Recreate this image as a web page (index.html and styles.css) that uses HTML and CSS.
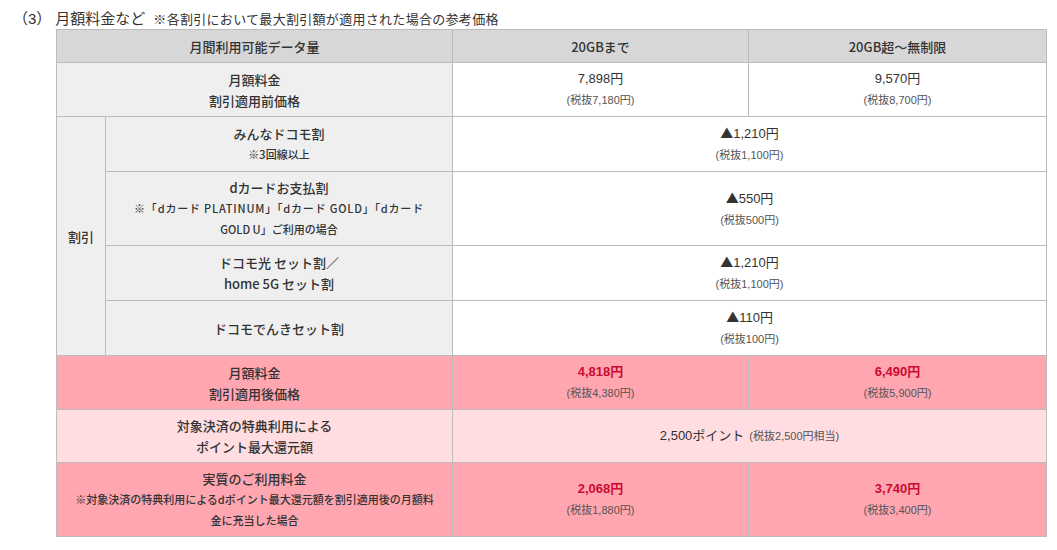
FILE: index.html
```html
<!DOCTYPE html>
<html lang="ja">
<head>
<meta charset="utf-8">
<title>月額料金など</title>
<link rel="stylesheet" href="styles.css">
</head>
<body>
<div class="heading">
  <span class="num">（3）</span><span class="ttl">月額料金など</span><span class="note">※各割引において最大割引額が適用された場合の参考価格</span>
</div>
<table class="price">
  <colgroup>
    <col class="c1"><col class="c2"><col class="c3"><col class="c4">
  </colgroup>
  <tr class="head">
    <th colspan="2"><span class="v">月間利用可能データ量</span></th>
    <th><span class="v">20GBまで</span></th>
    <th><span class="v">20GB超〜無制限</span></th>
  </tr>
  <tr>
    <th class="lbl" colspan="2"><span class="v">月額料金</span><span class="v">割引適用前価格</span></th>
    <td><span class="v">7,898円</span><span class="s">(税抜7,180円)</span></td>
    <td><span class="v">9,570円</span><span class="s">(税抜8,700円)</span></td>
  </tr>
  <tr>
    <th class="lbl side" rowspan="4"><span class="v">割引</span></th>
    <th class="lbl"><span class="v">みんなドコモ割</span><span class="s">※3回線以上</span></th>
    <td colspan="2"><span class="v"><span class="tri">▲</span>1,210円</span><span class="s">(税抜1,100円)</span></td>
  </tr>
  <tr>
    <th class="lbl"><span class="v">dカードお支払割</span><span class="s wide">※「dカード PLATINUM」「dカード GOLD」「dカード</span><span class="s">GOLD U」ご利用の場合</span></th>
    <td colspan="2"><span class="v"><span class="tri">▲</span>550円</span><span class="s">(税抜500円)</span></td>
  </tr>
  <tr>
    <th class="lbl"><span class="v">ドコモ光 セット割／</span><span class="v">home 5G セット割</span></th>
    <td colspan="2"><span class="v"><span class="tri">▲</span>1,210円</span><span class="s">(税抜1,100円)</span></td>
  </tr>
  <tr>
    <th class="lbl"><span class="v">ドコモでんきセット割</span></th>
    <td colspan="2"><span class="v"><span class="tri">▲</span>110円</span><span class="s">(税抜100円)</span></td>
  </tr>
  <tr class="pink">
    <th colspan="2"><span class="v">月額料金</span><span class="v">割引適用後価格</span></th>
    <td><span class="v red">4,818円</span><span class="s">(税抜4,380円)</span></td>
    <td><span class="v red">6,490円</span><span class="s">(税抜5,900円)</span></td>
  </tr>
  <tr class="light">
    <th colspan="2"><span class="v">対象決済の特典利用による</span><span class="v">ポイント最大還元額</span></th>
    <td colspan="2"><span class="v">2,500ポイント<span class="si">(税抜2,500円相当)</span></span></td>
  </tr>
  <tr class="pink">
    <th colspan="2"><span class="v">実質のご利用料金</span><span class="s">※対象決済の特典利用によるdポイント最大還元額を割引適用後の月額料</span><span class="s">金に充当した場合</span></th>
    <td><span class="v red">2,068円</span><span class="s">(税抜1,880円)</span></td>
    <td><span class="v red">3,740円</span><span class="s">(税抜3,400円)</span></td>
  </tr>
</table>
</body>
</html>
```

FILE: styles.css
```css
body {
  margin: 8px;
  font-family: "Liberation Sans", "Noto Sans CJK JP", sans-serif;
  color: #333;
  background: #fff;
}

.heading {
  height: 21px;
  line-height: 21px;
  padding-left: 5px;
  white-space: nowrap;
  overflow: visible;
}

.heading .num {
  font-size: 15px;
}

.heading .ttl {
  font-size: 15px;
  margin-left: 4px;
}

.heading .note {
  font-size: 13px;
  letter-spacing: 0.3px;
  margin-left: 8px;
}

.price {
  margin-left: 48px;
  width: 990px;
  table-layout: fixed;
  border-collapse: collapse;
  font-size: 13px;
}

.c1 { width: 49px; }
.c2 { width: 347px; }
.c3 { width: 296px; }
.c4 { width: 298px; }

.price th,
.price td {
  border: 1px solid #bcbcbc;
  padding: 5px 8px;
  text-align: center;
  vertical-align: middle;
  line-height: 0;
}

.price th {
  font-family: "Noto Sans CJK JP", sans-serif;
  font-weight: 500;
  background: #efefef;
}

.price td {
  background: #fff;
  font-weight: 400;
}

.price .v {
  display: block;
  font-size: 13px;
  line-height: 22px;
  white-space: nowrap;
}

.price th .v {
  line-height: 21px;
}

.price tr.head th {
  padding: 6px 8px 5px;
}

.price .s {
  display: block;
  font-size: 11px;
  line-height: 21px;
  color: #555;
  white-space: nowrap;
}

.price .s.wide {
  letter-spacing: 0.8px;
}

.price .si {
  font-size: 11px;
  color: #555;
  margin-left: 5px;
}

.price .tri {
  font-family: "Noto Sans CJK JP", sans-serif;
  font-size: 13px;
}

.price th .s {
  color: #333;
}

.price tr.head th {
  background: #d7d7d7;
}

.price .side {
  padding: 0;
}

.price tr.pink th,
.price tr.pink td {
  background: #ffa6b0;
}

.price tr.light th,
.price tr.light td {
  background: #ffdde1;
}

.price .red {
  color: #cc0a32;
  font-weight: 700;
}
```
